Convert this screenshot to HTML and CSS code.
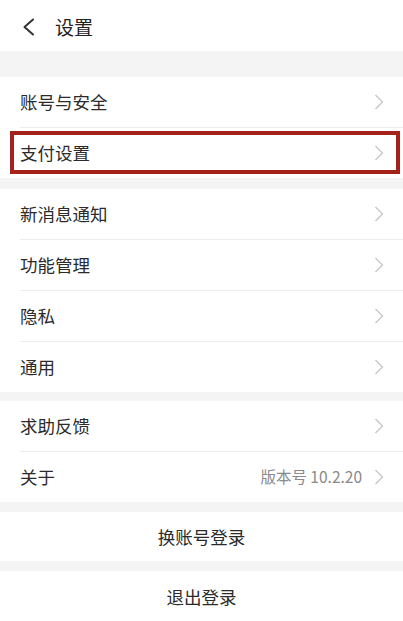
FILE: index.html
```html
<!DOCTYPE html>
<html lang="zh-CN">
<head>
<meta charset="utf-8">
<title>设置</title>
<link rel="stylesheet" href="styles.css">
</head>
<body>
<div class="page">
  <header class="header">
    <svg class="back" width="13" height="18" viewBox="0 0 13 18"><polyline points="11,1.5 2.5,9 11,16.5" fill="none" stroke="#333" stroke-width="2" stroke-linecap="round" stroke-linejoin="round"/></svg>
    <span class="title">设置</span>
  </header>
  <div class="gap gap-top"></div>
  <section class="group">
    <div class="row"><div class="row-inner"><span class="label">账号与安全</span><svg class="chev" width="10" height="16" viewBox="0 0 10 16"><polyline points="1.5,1 8.5,8 1.5,15" fill="none" stroke="#c6c6c6" stroke-width="1.3"/></svg></div></div>
    <div class="row row-hl"><div class="row-inner"><span class="label">支付设置</span><svg class="chev" width="10" height="16" viewBox="0 0 10 16"><polyline points="1.5,1 8.5,8 1.5,15" fill="none" stroke="#c6c6c6" stroke-width="1.3"/></svg></div><div class="hl-box"></div></div>
  </section>
  <div class="gap gap-a"></div>
  <section class="group">
    <div class="row"><div class="row-inner"><span class="label">新消息通知</span><svg class="chev" width="10" height="16" viewBox="0 0 10 16"><polyline points="1.5,1 8.5,8 1.5,15" fill="none" stroke="#c6c6c6" stroke-width="1.3"/></svg></div></div>
    <div class="row"><div class="row-inner"><span class="label">功能管理</span><svg class="chev" width="10" height="16" viewBox="0 0 10 16"><polyline points="1.5,1 8.5,8 1.5,15" fill="none" stroke="#c6c6c6" stroke-width="1.3"/></svg></div></div>
    <div class="row"><div class="row-inner"><span class="label">隐私</span><svg class="chev" width="10" height="16" viewBox="0 0 10 16"><polyline points="1.5,1 8.5,8 1.5,15" fill="none" stroke="#c6c6c6" stroke-width="1.3"/></svg></div></div>
    <div class="row"><div class="row-inner"><span class="label">通用</span><svg class="chev" width="10" height="16" viewBox="0 0 10 16"><polyline points="1.5,1 8.5,8 1.5,15" fill="none" stroke="#c6c6c6" stroke-width="1.3"/></svg></div></div>
  </section>
  <div class="gap gap-b"></div>
  <section class="group">
    <div class="row"><div class="row-inner"><span class="label">求助反馈</span><svg class="chev" width="10" height="16" viewBox="0 0 10 16"><polyline points="1.5,1 8.5,8 1.5,15" fill="none" stroke="#c6c6c6" stroke-width="1.3"/></svg></div></div>
    <div class="row"><div class="row-inner"><span class="label">关于</span><span class="value">版本号 10.2.20</span><svg class="chev" width="10" height="16" viewBox="0 0 10 16"><polyline points="1.5,1 8.5,8 1.5,15" fill="none" stroke="#c6c6c6" stroke-width="1.3"/></svg></div></div>
  </section>
  <div class="gap gap-c"></div>
  <div class="btn btn-switch">换账号登录</div>
  <div class="gap gap-c"></div>
  <div class="btn">退出登录</div>
</div>
</body>
</html>
```

FILE: styles.css
```css
html, body {
  margin: 0;
  padding: 0;
}
body {
  background: #f4f4f4;
  font-family: "Noto Sans CJK SC", "Noto Sans", sans-serif;
  color: #2a2a2a;
}
.page {
  width: 403px;
  height: 621px;
  overflow: hidden;
  display: flex;
  flex-direction: column;
}
.header {
  height: 51px;
  background: #fff;
  display: flex;
  align-items: center;
  padding-left: 22px;
  flex-shrink: 0;
}
.back {
  display: block;
  margin-top: 3px;
}
.title {
  font-size: 19px;
  margin-left: 20px;
  margin-top: 2px;
  color: #222;
  line-height: 1;
}
.gap { flex-shrink: 0; background: #f4f4f4; }
.gap-top { height: 26px; }
.gap-a { height: 11px; }
.gap-b { height: 9px; }
.gap-c { height: 10px; }
.group {
  background: #fff;
  flex-shrink: 0;
}
.row {
  padding-left: 20px;
  position: relative;
}
.row-inner {
  height: 50px;
  display: flex;
  align-items: center;
  padding-right: 19px;
  border-bottom: 1px solid #ededed;
}
.row:last-child .row-inner {
  border-bottom: none;
}
.label {
  font-size: 17.5px;
  flex: 1;
  color: #2b2b2b;
  line-height: 1;
}
.value {
  font-size: 15.5px;
  color: #8a8a8a;
  margin-right: 12px;
  line-height: 1;
}
.chev {
  display: block;
}
.hl-box {
  position: absolute;
  left: 10px;
  right: 3px;
  top: 3px;
  height: 43px;
  border: 4px solid #a5221b;
  box-sizing: border-box;
}
.btn {
  background: #fff;
  height: 50px;
  display: flex;
  align-items: center;
  justify-content: center;
  font-size: 17.5px;
  color: #2b2b2b;
  flex-shrink: 0;
}
.btn-switch { height: 49px; }
```
